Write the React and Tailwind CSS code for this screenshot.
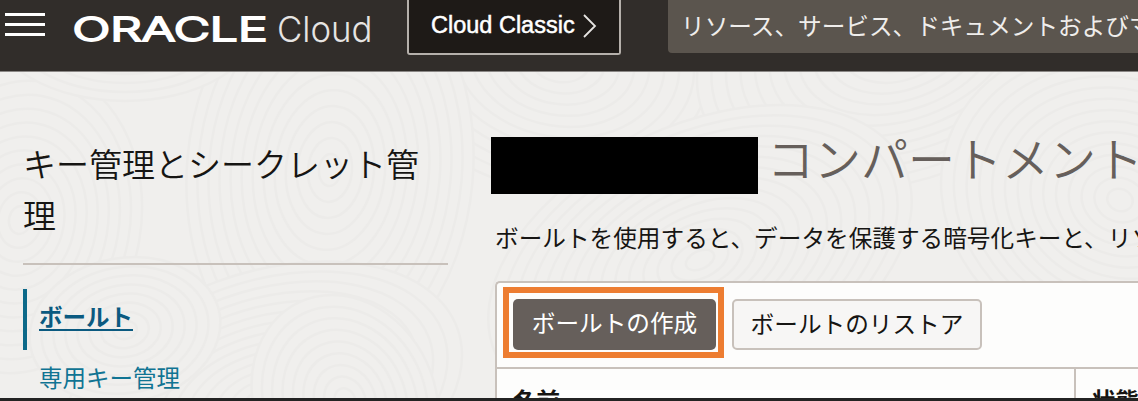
import React from "react";

const rippleCenters = [
  { x: 560, y: 60, rx: 15, ry: 11, n: 12, r: 10 },
  { x: 900, y: 40, rx: 15, ry: 10, n: 14, r: -20 },
  { x: 20, y: 220, rx: 11, ry: 14, n: 11, r: 10 },
  { x: 330, y: 170, rx: 11, ry: 16, n: 13, r: 5 },
  { x: 125, y: 20, rx: 15, ry: 9, n: 9, r: 0 },
  { x: 700, y: 260, rx: 15, ry: 9, n: 15, r: -25 },
  { x: 1120, y: 200, rx: 13, ry: 11, n: 14, r: 20 },
  { x: 260, y: 400, rx: 15, ry: 9, n: 14, r: -20 },
  { x: 125, y: 330, rx: 12, ry: 9, n: 8, r: -10 },
  { x: 345, y: 400, rx: 10, ry: 12, n: 9, r: -25 },
];

function Ripples() {
  return (
    <svg className="absolute inset-0 h-full w-full" viewBox="0 0 1138 401" aria-hidden="true">
      {rippleCenters.map((c, i) => (
        <g key={i} fill="#f0efed" stroke="#ecebe9" strokeWidth="2.5">
          {Array.from({ length: c.n }, (_, k) => (
            <ellipse
              key={k}
              cx={c.x}
              cy={c.y}
              rx={c.rx * (c.n - k)}
              ry={c.ry * (c.n - k)}
              transform={`rotate(${c.r} ${c.x} ${c.y})`}
            />
          ))}
        </g>
      ))}
    </svg>
  );
}

function Logo() {
  return (
    <svg className="ml-[25px] h-[60px] w-[305px] shrink-0" viewBox="70 0 305 60" fill="#fff">
      <text
        x="72.5"
        y="40.5"
        textLength="195"
        lengthAdjust="spacingAndGlyphs"
        stroke="#fff"
        strokeWidth="1.9"
        className="font-['Inter'] text-[33px] font-light"
      >
        ORACLE
      </text>
      <text
        x="277"
        y="41.5"
        textLength="95.5"
        lengthAdjust="spacingAndGlyphs"
        fill="#e6e4e2"
        className="font-['Inter'] text-[36px] font-light"
      >
        Cloud
      </text>
    </svg>
  );
}

function Header() {
  return (
    <header className="relative flex h-[71px] shrink-0 items-start bg-[#312d2a]">
      <div className="ml-[5px] mt-[13px] flex w-10 shrink-0 flex-col gap-[7px]">
        <span className="h-[3px] bg-white" />
        <span className="h-[3px] bg-white" />
        <span className="h-[3px] bg-white" />
      </div>
      <Logo />
      <div className="ml-[32px] flex h-[55px] w-[214px] shrink-0 items-start rounded-b-[3px] border-2 border-t-0 border-[#b5b0ab] bg-[#1e1a17] pl-[22px] pt-[10px] text-white">
        <span className="w-[150px] font-['Liberation_Sans'] text-[23.5px] font-medium leading-[30px] [-webkit-text-stroke:0.5px_white]">
          Cloud&nbsp;Classic
        </span>
        <svg className="mt-[4px] h-6 w-4" viewBox="0 0 16 24" fill="none" stroke="#e6e4e2" strokeWidth="1.8">
          <path d="M3 1 14 12 3 23" />
        </svg>
      </div>
      <div className="ml-[47px] h-[53px] flex-1 overflow-hidden whitespace-nowrap rounded-bl-[4px] bg-[#5b554e] pl-[13px] pt-[7px] text-[23.65px] leading-[36px] text-[#efedeb]">
        リソース、サービス、ドキュメントおよびマ
      </div>
    </header>
  );
}

function Sidebar() {
  return (
    <aside className="ml-[23px] w-[425px] shrink-0">
      <h2 className="mt-[66px] text-[33px] font-[350] leading-[51px] text-[#161513]">
        キー管理とシークレット管
        <br />理
      </h2>
      <div className="mt-[23px] h-[2px] bg-[#c8c1bb]" />
      <nav className="mt-[24px] text-[23.5px]">
        <div className="h-[61px] border-l-4 border-[#0c6989] pl-[12px] pt-[7px] font-bold leading-[40px] text-[#0b5a80] underline decoration-2 underline-offset-[3px]">
          ボールト
        </div>
        <div className="pl-4 pt-[7px] leading-[40px] text-[#107493]">専用キー管理</div>
      </nav>
    </aside>
  );
}

function Vaults() {
  return (
    <main className="min-w-0 flex-1 overflow-hidden whitespace-nowrap pl-[43px]">
      <div className="flex pt-[65px]">
        <div className="h-[57px] w-[267px] shrink-0 bg-black" />
        <h1 className="-mt-[15px] ml-[9px] h-[72px] text-[47px] font-[350] leading-[70px] text-[#665f5b]">
          コンパートメント
        </h1>
      </div>
      <p className="ml-[4px] mt-[23px] text-[23.65px] leading-[40px] text-[#161513]">
        ボールトを使用すると、データを保護する暗号化キーと、リソ
      </p>
      <section className="ml-[4px] mt-[24px] h-[140px] rounded-tl-[5px] border-l-2 border-t-2 border-[#c8c1bb] bg-[#fdfdfc]">
        <div className="flex h-[86px] gap-[8px] border-b-2 border-[#c8c1bb] pl-[6px] pt-[4px]">
          <div className="h-[71px] w-[221px] shrink-0 border-[6px] border-[#ed7d31] p-[4px] pt-[6px]">
            <button className="block h-[51px] w-[203px] rounded-[5px] bg-[#665f5b] pb-[5px] text-[23.65px] leading-[46px] text-white">
              ボールトの作成
            </button>
          </div>
          <button className="mt-[12px] h-[51px] w-[250px] shrink-0 rounded-[5px] border-2 border-[#c8c1bb] bg-[#f7f6f5] pb-[3px] text-[23.65px] leading-[44px] text-[#161513]">
            ボールトのリストア
          </button>
        </div>
        <div className="flex h-[60px] text-[23.5px] font-bold leading-[36px] text-[#161513]">
          <div className="w-[579px] shrink-0 border-r-2 border-[#c8c1bb] pl-[16px] pt-[13px]">名前</div>
          <div className="pl-[16px] pt-[13px]">状態</div>
        </div>
      </section>
    </main>
  );
}

export default function App() {
  return (
    <div
      lang="ja"
      className="relative flex h-[401px] w-[1138px] flex-col overflow-hidden bg-[#f0efed] font-['Noto_Sans_CJK_JP',sans-serif]"
    >
      <Ripples />
      <Header />
      <div className="relative flex h-[327px] shrink-0 overflow-hidden border-t border-[#8b8886]">
        <Sidebar />
        <Vaults />
      </div>
      <div className="relative h-[3px] shrink-0 bg-[#232323]" />
    </div>
  );
}
